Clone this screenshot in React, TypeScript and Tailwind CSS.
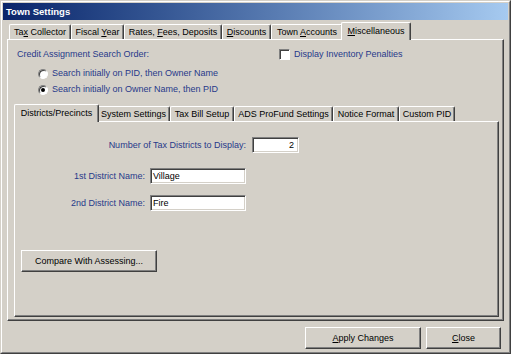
import React from 'react';

const label = 'text-[#27398a]';

function Tab({ children, w, selected }: { children: React.ReactNode; w: string; selected?: boolean }) {
  if (selected) {
    return (
      <div
        className={`relative z-10 -mx-[2px] -mb-px flex h-[18px] items-center justify-center rounded-t-[2px] border-l border-t border-r border-white border-r-[#404040] bg-[#d4d0c8] pb-[1px] shadow-[inset_-1px_0_0_#808080] ${w}`}
      >
        <span>{children}</span>
      </div>
    );
  }
  return (
    <div
      className={`flex h-[15px] items-center justify-center rounded-t-[2px] border-l border-t border-r border-white border-r-[#404040] shadow-[inset_-1px_0_0_#808080] ${w}`}
    >
      <span>{children}</span>
    </div>
  );
}

function Key({ children }: { children: React.ReactNode }) {
  return <span className="underline underline-offset-[1px]">{children}</span>;
}

function Button({ children, w }: { children: React.ReactNode; w: string }) {
  return (
    <div
      className={`flex h-[22px] items-center justify-center border border-white border-r-[#404040] border-b-[#404040] bg-[#d4d0c8] text-black shadow-[inset_-1px_-1px_0_#808080] ${w}`}
    >
      <span>{children}</span>
    </div>
  );
}

function Field({ value, w, right }: { value: string; w: string; right?: boolean }) {
  return (
    <div
      className={`flex h-[16px] items-center border border-[#808080] border-r-white border-b-white bg-white px-[2px] text-black shadow-[inset_1px_1px_0_#404040,inset_-1px_-1px_0_#d4d0c8] ${right ? 'justify-end pr-[4px]' : ''} ${w}`}
    >
      {value}
    </div>
  );
}

function Radio({ checked, text }: { checked?: boolean; text: string }) {
  return (
    <div className="flex h-[13px] items-center pl-[30px]">
      <div className="flex h-[10px] w-[10px] items-center justify-center rounded-full border border-[#808080] border-r-white border-b-white bg-white shadow-[inset_1px_1px_0_#404040]">
        {checked && <div className="h-[4px] w-[4px] rounded-full bg-black" />}
      </div>
      <span className={`ml-[4px] ${label}`}>{text}</span>
    </div>
  );
}

export default function App() {
  return (
    <div className="h-[354px] w-[511px] border border-[#d4d0c8] border-r-[#404040] border-b-[#404040] bg-[#d4d0c8] font-['Liberation_Sans',Arial,sans-serif] text-[9px] leading-[11px] text-black">
      <div className="flex h-full flex-col border border-white border-r-[#808080] border-b-[#808080] p-px">
        {/* Title bar */}
        <div className="flex h-[17px] items-center bg-linear-to-r from-[#0a246a] to-[#a6caf0] pl-[3px] text-[9.5px] font-bold text-white">
          Town Settings
        </div>

        {/* Outer tabs */}
        <div className="flex flex-1 flex-col px-[4px]">
          <div className="mt-[2px] flex h-[17px] items-end pl-[2px]">
            <Tab w="w-[62px]">
              Ta<Key>x</Key> Collector
            </Tab>
            <Tab w="w-[53px]">
              Fiscal <Key>Y</Key>ear
            </Tab>
            <Tab w="w-[98px]">
              Rates, <Key>F</Key>ees, Deposits
            </Tab>
            <Tab w="w-[49px]">
              <Key>D</Key>iscounts
            </Tab>
            <Tab w="w-[72px]">
              Town <Key>A</Key>ccounts
            </Tab>
            <Tab w="w-[70px]" selected>
              <Key>M</Key>iscellaneous
            </Tab>
          </div>

          <div className="flex flex-1 flex-col border border-white border-r-[#404040] border-b-[#404040] pb-[3px] shadow-[inset_-1px_-1px_0_#808080]">
            <div className="mt-[8px] flex h-[13px] items-center">
              <span className={`ml-[9px] w-[262px] ${label}`}>Credit Assignment Search Order:</span>
              <div className="h-[11px] w-[11px] border border-[#808080] border-r-white border-b-white bg-white shadow-[inset_1px_1px_0_#404040]" />
              <span className={`ml-[4px] ${label}`}>Display Inventory Penalties</span>
            </div>

            <div className="mt-[6px]">
              <Radio text="Search initially on PID, then Owner Name" />
            </div>
            <div className="mt-[3px]">
              <Radio checked text="Search initially on Owner Name, then PID" />
            </div>

            {/* Inner tabs */}
            <div className="mt-[8px] ml-[6px] mr-[4px] flex flex-1 flex-col">
              <div className="flex h-[17px] items-end pl-[2px]">
                <Tab w="w-[85px]" selected>
                  Districts/Precincts
                </Tab>
                <Tab w="w-[73px]">System Settings</Tab>
                <Tab w="w-[64px]">Tax Bill Setup</Tab>
                <Tab w="w-[99px]">ADS ProFund Settings</Tab>
                <Tab w="w-[66px]">Notice Format</Tab>
                <Tab w="w-[56px]">Custom PID</Tab>
              </div>

              <div className="flex flex-1 flex-col border border-white border-r-[#404040] border-b-[#404040] shadow-[inset_-1px_-1px_0_#808080]">
                <div className="mt-[15px] flex h-[16px] items-center">
                  <span className={`w-[231px] text-right ${label}`}>Number of Tax Districts to Display:</span>
                  <div className="ml-[6px]">
                    <Field value="2" w="w-[47px]" right />
                  </div>
                </div>
                <div className="mt-[15px] flex h-[16px] items-center">
                  <span className={`w-[130px] text-right ${label}`}>1st District Name:</span>
                  <div className="ml-[5px]">
                    <Field value="Village" w="w-[96px]" />
                  </div>
                </div>
                <div className="mt-[11px] flex h-[16px] items-center">
                  <span className={`w-[130px] text-right ${label}`}>2nd District Name:</span>
                  <div className="ml-[5px]">
                    <Field value="Fire" w="w-[96px]" />
                  </div>
                </div>
                <div className="mt-[39px] ml-[6px]">
                  <Button w="w-[136px]">Compare With Assessing...</Button>
                </div>
              </div>
            </div>
          </div>
        </div>

        {/* Footer buttons */}
        <div className="flex h-[30px] justify-end gap-[5px] pt-[6px] pr-[7px]">
          <Button w="w-[116px]">
            <Key>A</Key>pply Changes
          </Button>
          <Button w="w-[75px]">
            <Key>C</Key>lose
          </Button>
        </div>
      </div>
    </div>
  );
}
